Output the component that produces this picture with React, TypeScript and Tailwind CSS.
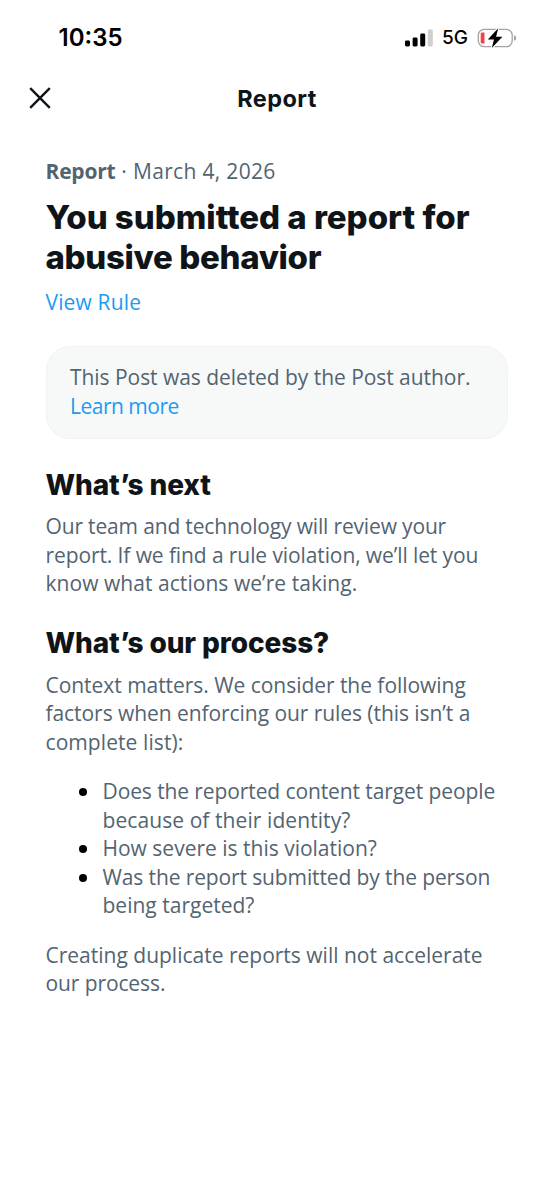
import type { ReactNode } from 'react';
import clsx from 'clsx';

type Line = { text: string; tracking?: string };

const REVIEW: Line[] = [
  { text: 'Our team and technology will review your', tracking: 'tracking-[-0.16px]' },
  { text: 'report. If we find a rule violation, we’ll let you' },
  { text: 'know what actions we’re taking.', tracking: 'tracking-[0.05px]' },
];

const PROCESS: Line[] = [
  { text: 'Context matters. We consider the following', tracking: 'tracking-[-0.04px]' },
  { text: 'factors when enforcing our rules (this isn’t a', tracking: 'tracking-[-0.06px]' },
  { text: 'complete list):', tracking: 'tracking-[0.08px]' },
];

const CRITERIA: Line[][] = [
  [
    { text: 'Does the reported content target people' },
    { text: 'because of their identity?', tracking: 'tracking-[0.08px]' },
  ],
  [{ text: 'How severe is this violation?', tracking: 'tracking-[0px]' }],
  [
    { text: 'Was the report submitted by the person', tracking: 'tracking-[-0.12px]' },
    { text: 'being targeted?', tracking: 'tracking-[0.01px]' },
  ],
];

const DUPLICATES: Line[] = [
  { text: 'Creating duplicate reports will not accelerate', tracking: 'tracking-[0px]' },
  { text: 'our process.' },
];

function SignalIcon() {
  return (
    <svg viewBox="0 0 28 18" className="h-[18px] w-7" aria-hidden="true">
      <rect x="0" y="11.5" width="5" height="6" rx="1.4" fill="#000" />
      <rect x="7.6" y="8.5" width="5" height="9" rx="1.4" fill="#000" />
      <rect x="15.2" y="4.5" width="5" height="13" rx="1.4" fill="#000" />
      <rect x="22.8" y="0.5" width="5" height="17" rx="1.4" fill="#cfcfcf" />
    </svg>
  );
}

function BatteryIcon() {
  return (
    <svg viewBox="0 0 40 22" className="h-[22px] w-10" aria-hidden="true">
      <rect x="1.3" y="2.3" width="33.9" height="17.4" rx="6" fill="none" stroke="#a3a3a3" strokeWidth="1.3" />
      <path d="M37 8.2c1.7.5 2.2 1.6 2.2 2.8s-.5 2.3-2.2 2.8z" fill="#a3a3a3" />
      <path d="M7.5 5.5v11H5.2A1.5 1.5 0 0 1 3.7 15V7a1.500 1.500 0 0 1 1.500-1.500z" fill="#f4404b" />
      <path
        d="M21.2 1.2 10.8 12.4h6.2L14.8 21l10.6-11.3h-6.3z"
        fill="#000"
        stroke="#fff"
        strokeWidth="2.2"
        paintOrder="stroke"
      />
    </svg>
  );
}

function Body({ lines, className }: { lines: Line[]; className?: string }) {
  return (
    <p className={clsx('text-[21px] leading-[28.5px] whitespace-nowrap text-[#536471]', className)}>
      {lines.map(({ text, tracking = 'tracking-[-0.1px]' }) => (
        <span key={text} className={clsx('block', tracking)}>{text}</span>
      ))}
    </p>
  );
}

function SectionTitle({ children }: { children: ReactNode }) {
  return (
    <h2 className="font-['Inter',sans-serif] text-[28px] leading-9 font-extrabold tracking-[-0.1px] whitespace-nowrap">
      {children}
    </h2>
  );
}

export default function App() {
  return (
    <div className="min-h-[1199px] w-[554px] overflow-hidden bg-white font-['Open_Sans',sans-serif] text-[#0f1419]">
      {/* Status bar */}
      <div className="flex h-[74px] items-center justify-between pt-px pr-[37px] pl-[58.5px] font-['Inter',sans-serif] text-black">
        <span className="text-[24px] font-semibold">10:35</span>
        <div className="flex items-center">
          <SignalIcon />
          <span className="mr-[9px] ml-[9px] pt-px text-[19px] font-medium">5G</span>
          <BatteryIcon />
        </div>
      </div>

      {/* Navigation */}
      <header className="relative flex h-12 items-center justify-center">
        <button type="button" aria-label="Close" className="absolute left-[29px]">
          <svg viewBox="0 0 22 22" className="size-[22px]" stroke="#0f1419" strokeWidth="2.4">
            <path d="M1.2 1.2 20.8 20.8M20.8 1.2 1.2 20.8" />
          </svg>
        </button>
        <h1 className="pt-0.5 font-['Inter',sans-serif] text-[23.5px] font-bold tracking-[0.4px]">Report</h1>
      </header>

      <main className="pt-[35px] pr-[46px] pl-[45.5px]">
        <p className="text-[21px] leading-[28px] tracking-[0.33px] text-[#536471]">
          <span className="font-bold tracking-[-0.2px]">Report</span> · March 4, 2026
        </p>
        <h1 className="mt-[12px] font-['Inter',sans-serif] text-[33px] leading-[40px] font-extrabold whitespace-nowrap">
          <span className="block tracking-[-0.01px]">You submitted a report for</span>
          <span className="block tracking-[-0.33px]">abusive behavior</span>
        </h1>
        <a className="mt-[11px] block text-[21px] leading-[28px] tracking-[0.15px] text-[#1d9bf0]">View Rule</a>

        <div className="mt-[29.5px] h-[93px] rounded-[24px] border border-[#eff3f4] bg-[#f7f9f9] px-[23.5px] pt-[16.5px]">
          <Body lines={[{ text: 'This Post was deleted by the Post author.', tracking: 'tracking-[-0.05px]' }]} />
          <a className="block text-[21px] leading-[28.5px] tracking-[-0.5px] text-[#1d9bf0]">Learn more</a>
        </div>

        <section className="mt-[28px]">
          <SectionTitle>What’s next</SectionTitle>
          <Body className="mt-[9.7px]" lines={REVIEW} />
        </section>

        <section className="mt-[27.5px]">
          <SectionTitle>What’s our process?</SectionTitle>
          <Body className="mt-[9.7px]" lines={PROCESS} />
          <ul className="mt-[21px]">
            {CRITERIA.map((lines) => (
              <li key={lines[0].text} className="flex">
                <span className="mt-[11px] mr-[15.5px] ml-[33.5px] size-2 shrink-0 rounded-full bg-black" />
                <Body lines={lines} />
              </li>
            ))}
          </ul>
          <Body className="mt-[21px]" lines={DUPLICATES} />
        </section>
      </main>
    </div>
  );
}
